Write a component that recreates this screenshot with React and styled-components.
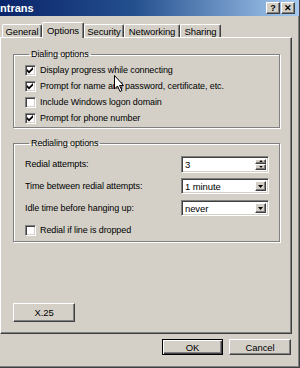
import styled, { createGlobalStyle } from "styled-components";

const GlobalStyle = createGlobalStyle`
  html, body {
    margin: 0;
    padding: 0;
    background: #d4d0c8;
  }
  body {
    font-family: "Liberation Sans", Arial, sans-serif;
    font-size: 9px;
    letter-spacing: -0.1px;
    color: #000;
  }
`;

const Window = styled.div`
  position: relative;
  width: 300px;
  height: 368px;
  box-sizing: border-box;
  background: #d4d0c8;
  border-right: 1px solid #404040;
  border-bottom: 1px solid #404040;
  box-shadow: inset -1px -1px 0 #808080;
  display: flex;
  flex-direction: column;
  overflow: hidden;
`;

const TitleBar = styled.div`
  height: 16px;
  flex: none;
  display: flex;
  align-items: center;
  justify-content: space-between;
  padding-right: 4px;
  background: linear-gradient(to right, #0a246a 0%, #24508e 45%, #a6caf0 100%);
`;

const TitleText = styled.span`
  color: #fff;
  font-weight: bold;
  font-size: 11px;
  letter-spacing: 0;
  line-height: 16px;
`;

const TitleButtons = styled.div`
  display: flex;
  gap: 1px;
`;

const TitleButton = styled.div`
  width: 14px;
  height: 12px;
  box-sizing: border-box;
  background: #d4d0c8;
  border-top: 1px solid #fff;
  border-left: 1px solid #fff;
  border-right: 1px solid #404040;
  border-bottom: 1px solid #404040;
  box-shadow: inset -1px -1px 0 #808080;
  display: flex;
  align-items: center;
  justify-content: center;
  font-weight: bold;
  font-size: 9px;
  line-height: 1;
`;

const Body = styled.div`
  flex: 1;
  display: flex;
  flex-direction: column;
  padding-right: 7px;
`;

const TabRow = styled.div`
  display: flex;
  align-items: flex-end;
  height: 15px;
  margin-top: 6px;
  padding-left: 2px;
  position: relative;
  z-index: 1;
`;

const Tab = styled.div`
  width: ${(p) => p.w}px;
  height: ${(p) => (p.active ? 16 : 13)}px;
  box-sizing: border-box;
  display: flex;
  align-items: ${(p) => (p.active ? "flex-start" : "center")};
  padding-top: ${(p) => (p.active ? 2 : 0)}px;
  justify-content: center;
  background: #d4d0c8;
  border-top: 1px solid #fff;
  border-left: 1px solid #fff;
  border-right: 1px solid #404040;
  border-radius: 2px 2px 0 0;
  box-shadow: inset -1px 0 0 #808080;
  margin-bottom: ${(p) => (p.active ? -1 : 0)}px;
  font-size: 9.5px;
  white-space: nowrap;
`;

const Panel = styled.div`
  height: 297px;
  box-sizing: border-box;
  border-top: 1px solid #fff;
  border-left: 1px solid #fff;
  border-right: 1px solid #404040;
  border-bottom: 1px solid #404040;
  box-shadow: inset -1px -1px 0 #808080;
  display: flex;
  flex-direction: column;
  padding: 11px 11px 11px 12px;
`;

const Group = styled.fieldset`
  margin: 0 0 ${(p) => p.gap || 0}px 0;
  padding: ${(p) => p.pad};
  border: 1px solid #808080;
  box-shadow: 1px 1px 0 #fff, inset 1px 1px 0 #fff;
  display: flex;
  flex-direction: column;
  min-width: 0;
`;

const Legend = styled.legend`
  padding: 0 2px;
  margin-left: 4px;
  line-height: 11px;
`;

const CheckRow = styled.label`
  display: flex;
  align-items: center;
  gap: 4px;
  height: ${(p) => p.h || 16}px;
  white-space: nowrap;
`;

const Box = styled.span`
  width: 11px;
  height: 11px;
  box-sizing: border-box;
  background: #fff;
  border-top: 1px solid #808080;
  border-left: 1px solid #808080;
  border-right: 1px solid #fff;
  border-bottom: 1px solid #fff;
  box-shadow: inset 1px 1px 0 #404040, inset -1px -1px 0 #d4d0c8;
  display: flex;
  align-items: center;
  justify-content: center;
  flex: none;
`;

const FieldRow = styled.div`
  display: flex;
  align-items: center;
  justify-content: space-between;
  height: ${(p) => p.h}px;
`;

const Field = styled.div`
  width: 88px;
  height: ${(p) => p.h}px;
  box-sizing: border-box;
  background: #fff;
  border-top: 1px solid #808080;
  border-left: 1px solid #808080;
  border-right: 1px solid #fff;
  border-bottom: 1px solid #fff;
  box-shadow: inset 1px 1px 0 #404040, inset -1px -1px 0 #d4d0c8;
  display: flex;
  align-items: center;
  padding: 2px 2px 2px 3px;
  gap: 2px;
  font-size: 9.5px;
`;

const FieldText = styled.span`
  flex: 1;
`;

const Spinner = styled.div`
  width: 11px;
  align-self: stretch;
  display: flex;
  flex-direction: column;
`;

const Bevel = styled.div`
  box-sizing: border-box;
  background: #d4d0c8;
  border-top: 1px solid #fff;
  border-left: 1px solid #fff;
  border-right: 1px solid #404040;
  border-bottom: 1px solid #404040;
  box-shadow: inset -1px -1px 0 #808080;
  display: flex;
  align-items: center;
  justify-content: center;
  flex: ${(p) => p.flex || "none"};
  width: ${(p) => p.w || "auto"};
  align-self: stretch;
`;

const Button = styled.div`
  width: ${(p) => p.w}px;
  height: ${(p) => p.h}px;
  box-sizing: border-box;
  background: #d4d0c8;
  display: flex;
  align-items: center;
  justify-content: center;
  font-size: 9.5px;
  border-top: 1px solid ${(p) => (p.primary ? "#000" : "#fff")};
  border-left: 1px solid ${(p) => (p.primary ? "#000" : "#fff")};
  border-right: 1px solid ${(p) => (p.primary ? "#000" : "#404040")};
  border-bottom: 1px solid ${(p) => (p.primary ? "#000" : "#404040")};
  box-shadow: ${(p) =>
    p.primary
      ? "inset 1px 1px 0 #fff, inset -1px -1px 0 #404040, inset -2px -2px 0 #808080"
      : "inset -1px -1px 0 #808080"};
`;

const PanelFooter = styled.div`
  margin-top: auto;
  display: flex;
`;

const ButtonRow = styled.div`
  display: flex;
  justify-content: flex-end;
  gap: 6px;
  padding-top: 5px;
  padding-right: 1px;
`;

const Cursor = styled.svg`
  position: absolute;
  left: 114px;
  top: 75px;
`;

const Check = () => (
  <svg width="7" height="7" viewBox="0 0 7 7">
    <path d="M0 2 L2 4 L6 0 L6 2.5 L2 6.5 L0 4.5 Z" fill="#000" />
  </svg>
);

const Arrow = ({ up, w = 5, h = 3 }) => (
  <svg width={w} height={h} viewBox="0 0 5 3">
    <path d={up ? "M0 3 H5 L2.5 0 Z" : "M0 0 H5 L2.5 3 Z"} fill="#000" />
  </svg>
);

const CheckItem = ({ checked, children, h }) => (
  <CheckRow h={h}>
    <Box>{checked && <Check />}</Box>
    {children}
  </CheckRow>
);

const Select = ({ value }) => (
  <Field h={16}>
    <FieldText>{value}</FieldText>
    <Bevel w="11px">
      <Arrow />
    </Bevel>
  </Field>
);

const tabs = [
  ["General", 40],
  ["Options", 42],
  ["Security", 40],
  ["Networking", 56],
  ["Sharing", 41],
];

export default function App() {
  return (
    <>
      <GlobalStyle />
      <Window>
        <TitleBar>
          <TitleText>ntrans</TitleText>
          <TitleButtons>
            <TitleButton>?</TitleButton>
            <TitleButton>✕</TitleButton>
          </TitleButtons>
        </TitleBar>
        <Body>
          <TabRow>
            {tabs.map(([name, w]) => (
              <Tab key={name} w={w} active={name === "Options"}>
                {name}
              </Tab>
            ))}
          </TabRow>
          <Panel>
            <Group gap={10} pad="2px 10px 1px 11px">
              <Legend>Dialing options</Legend>
              <CheckItem checked>Display progress while connecting</CheckItem>
              <CheckItem checked>
                Prompt for name and password, certificate, etc.
              </CheckItem>
              <CheckItem>Include Windows logon domain</CheckItem>
              <CheckItem checked>Prompt for phone number</CheckItem>
            </Group>
            <Group pad="4px 10px 0 11px">
              <Legend>Redialing options</Legend>
              <FieldRow h={22}>
                <span>Redial attempts:</span>
                <Field h={17}>
                  <FieldText>3</FieldText>
                  <Spinner>
                    <Bevel flex="1">
                      <Arrow up w={4} h={2} />
                    </Bevel>
                    <Bevel flex="1">
                      <Arrow w={4} h={2} />
                    </Bevel>
                  </Spinner>
                </Field>
              </FieldRow>
              <FieldRow h={22}>
                <span>Time between redial attempts:</span>
                <Select value="1 minute" />
              </FieldRow>
              <FieldRow h={22}>
                <span>Idle time before hanging up:</span>
                <Select value="never" />
              </FieldRow>
              <CheckItem h={22}>Redial if line is dropped</CheckItem>
            </Group>
            <PanelFooter>
              <Button w={62} h={19}>
                X.25
              </Button>
            </PanelFooter>
          </Panel>
          <ButtonRow>
            <Button w={61} h={16} primary>
              OK
            </Button>
            <Button w={62} h={16}>
              Cancel
            </Button>
          </ButtonRow>
        </Body>
        <Cursor width="11" height="18" viewBox="0 0 11 18">
          <path
            d="M0.5 0.5 L0.5 14 L3.5 11 L6 16.5 L8 15.5 L5.5 10.5 L9.5 10.5 Z"
            fill="#fff"
            stroke="#000"
            strokeWidth="1"
          />
        </Cursor>
      </Window>
    </>
  );
}
